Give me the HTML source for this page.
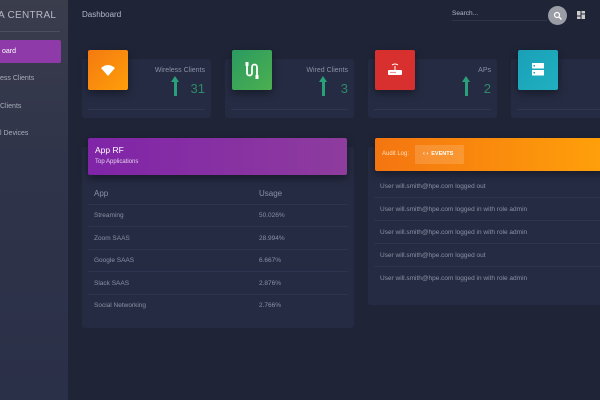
<!DOCTYPE html>
<html><head><style>
*{margin:0;padding:0;box-sizing:border-box}
body{width:600px;height:400px;overflow:hidden;background:#1f2437;font-family:"Liberation Sans",sans-serif;position:relative}
.side{position:absolute;left:0;top:0;width:68px;height:400px;background:linear-gradient(180deg,#3a3d4c 0%,#30344a 40%,#2a3048 100%);overflow:hidden}
.side .t{position:absolute;left:-2px;top:10px;color:#b5b8c4;font-size:10px;letter-spacing:.3px}
.side .ln{position:absolute;left:0;top:31px;width:60px;height:1px;background:#4a4e5e}
.side .act{position:absolute;left:0;top:40px;width:61px;height:23px;background:#8e3aa8;border-radius:0 2px 2px 0;color:#fff;font-size:7px;line-height:23px;padding-left:2px}
.side .it{position:absolute;left:0;font-size:7px;color:#a8acb8}
.c{position:absolute;background:#252b42;border-radius:3px}
.ic{position:absolute;width:40px;height:40px;border-radius:2px;box-shadow:0 3px 8px rgba(0,0,0,.4)}
.lbl{position:absolute;right:6px;top:8px;font-size:7px;color:#8a90a4}
.num{position:absolute;right:6px;top:22px;font-size:13px;color:#2e8a6a}
.arr{position:absolute;top:20px;width:3px;height:17px;background:#2aa07a}
.arr:before{content:"";position:absolute;left:-3px;top:-3px;border-left:4.5px solid transparent;border-right:4.5px solid transparent;border-bottom:6px solid #2aa07a}
.hl{position:absolute;left:6px;right:6px;top:49px;height:1px;background:#2f3650}
.row{position:absolute;left:6px;right:6px;height:22px;border-bottom:1px solid #2d3450;font-size:6.5px;color:#8a90a4;line-height:22px}
.row span{position:absolute;left:6px}.row b{position:absolute;left:171px;font-weight:normal}
.ev{position:absolute;left:6px;right:0;height:23px;border-bottom:1px solid #2d3450;font-size:6.5px;color:#8a90a4;line-height:23px;padding-left:6px}
</style></head><body>
<div class="side">
<div class="t">A CENTRAL</div><div class="ln"></div>
<div class="act">oard</div>
<div class="it" style="top:75px">ess Clients</div>
<div class="it" style="top:103px">Clients</div>
<div class="it" style="top:130px">l Devices</div>
</div>
<div style="position:absolute;left:82px;top:10px;color:#b5b8c8;font-size:8px">Dashboard</div>
<div style="position:absolute;left:452px;top:10px;color:#b5b8c8;font-size:6.5px">Search...</div>
<div style="position:absolute;left:452px;top:20px;width:95px;height:1px;background:#2f3548"></div>
<div style="position:absolute;left:548px;top:6px;width:19px;height:19px;border-radius:50%;background:#9a9ca6"><svg width="19" height="19"><circle cx="9" cy="9" r="2.5" stroke="#fff" stroke-width="1.2" fill="none"/><path d="M11 11l2.5 2.5" stroke="#fff" stroke-width="1.3"/></svg></div>
<svg style="position:absolute;left:577px;top:11px" width="8" height="8"><rect x="0" y="0" width="3.5" height="4.5" fill="#ccc"/><rect x="4.5" y="0" width="3.5" height="2.5" fill="#ccc"/><rect x="0" y="5.5" width="3.5" height="2.5" fill="#ccc"/><rect x="4.5" y="3.5" width="3.5" height="4.5" fill="#ccc"/></svg>

<div class="c" style="left:82px;top:59px;width:129px;height:59px"><div class="lbl">Wireless Clients</div><div class="arr" style="left:92px"></div><div class="num">31</div><div class="hl" style="top:50px"></div></div>
<div class="ic" style="left:88px;top:50px;background:linear-gradient(135deg,#f47a10,#ff9e0a)"><svg width="40" height="40"><path d="M13 18 Q20 12 27 18 L20 26Z" fill="#fff"/></svg></div>
<div class="c" style="left:225px;top:59px;width:129px;height:59px"><div class="lbl">Wired Clients</div><div class="arr" style="left:97px"></div><div class="num">3</div><div class="hl" style="top:50px"></div></div>
<div class="ic" style="left:232px;top:50px;background:linear-gradient(135deg,#2a9a60,#4cb050)"><svg width="40" height="40"><path d="M15 14v9a2.5 2.5 0 005 0v-6a2.5 2.5 0 015 0v9" stroke="#fff" stroke-width="1.8" fill="none"/><rect x="13.5" y="12" width="3" height="4" fill="#fff"/><rect x="23.5" y="25" width="3" height="4" fill="#fff"/></svg></div>
<div class="c" style="left:368px;top:59px;width:129px;height:59px"><div class="lbl">APs</div><div class="arr" style="left:97px"></div><div class="num">2</div><div class="hl" style="top:50px"></div></div>
<div class="ic" style="left:375px;top:50px;background:#d8302e"><svg width="40" height="40"><rect x="13" y="20" width="14" height="5" rx="1" fill="#fff"/><path d="M20 20v-4M17 15q3-2 6 0" stroke="#fff" stroke-width="1" fill="none"/><circle cx="16" cy="22.5" r=".6" fill="#d8302e"/><circle cx="18" cy="22.5" r=".6" fill="#d8302e"/><circle cx="20" cy="22.5" r=".6" fill="#d8302e"/></svg></div>
<div class="c" style="left:511px;top:59px;width:100px;height:59px"><div class="hl" style="top:50px"></div></div>
<div class="ic" style="left:518px;top:50px;background:linear-gradient(135deg,#1aa0b8,#20b0c0)"><svg width="40" height="40"><rect x="14" y="13" width="12" height="5.5" rx=".5" fill="#fff"/><rect x="14" y="20" width="12" height="5.5" rx=".5" fill="#fff"/><rect x="15.5" y="15" width="1.5" height="1.5" fill="#1aa0b8"/><rect x="15.5" y="22" width="1.5" height="1.5" fill="#1aa0b8"/></svg></div>

<div class="c" style="left:82px;top:147px;width:272px;height:181px">
<div style="position:absolute;left:6px;top:36px;width:260px;height:22px;border-bottom:1px solid #2d3450;font-size:8px;color:#8a90a4;line-height:22px"><span style="position:absolute;left:6px">App</span><span style="position:absolute;left:171px">Usage</span></div>
<div class="row" style="top:58px"><span>Streaming</span><b>50.026%</b></div>
<div class="row" style="top:81px"><span>Zoom SAAS</span><b>28.994%</b></div>
<div class="row" style="top:103px"><span>Google SAAS</span><b>6.667%</b></div>
<div class="row" style="top:126px"><span>Slack SAAS</span><b>2.876%</b></div>
<div class="row" style="top:148px;border:none"><span>Social Networking</span><b>2.766%</b></div>
</div>
<div style="position:absolute;left:88px;top:138px;width:259px;height:37px;background:linear-gradient(90deg,#8024a8,#8e3c9e);border-radius:2px;box-shadow:0 3px 8px rgba(0,0,0,.4)"><div style="position:absolute;left:7px;top:7px;color:#fff;font-size:8.5px">App RF</div><div style="position:absolute;left:7px;top:21px;color:#e4d0ee;font-size:6px">Top Applications</div></div>

<div class="c" style="left:368px;top:147px;width:240px;height:158px">
<div class="ev" style="top:28px">User will.smith@hpe.com logged out</div>
<div class="ev" style="top:51px">User will.smith@hpe.com logged in with role admin</div>
<div class="ev" style="top:74px">User will.smith@hpe.com logged in with role admin</div>
<div class="ev" style="top:97px">User will.smith@hpe.com logged out</div>
<div class="ev" style="top:120px;border:none">User will.smith@hpe.com logged in with role admin</div>
</div>
<div style="position:absolute;left:375px;top:138px;width:230px;height:33px;background:linear-gradient(90deg,#f47510,#ffa00a);border-radius:2px;box-shadow:0 3px 8px rgba(0,0,0,.4)"><div style="position:absolute;left:7px;top:13px;color:#ffe0c0;font-size:6px">Audit Log:</div><div style="position:absolute;left:40px;top:7px;width:49px;height:19px;background:rgba(255,255,255,.15);color:#fff;font-size:5.5px;font-weight:bold;line-height:19px;padding-left:8px">‹ › &nbsp;EVENTS</div></div>
</body></html>
